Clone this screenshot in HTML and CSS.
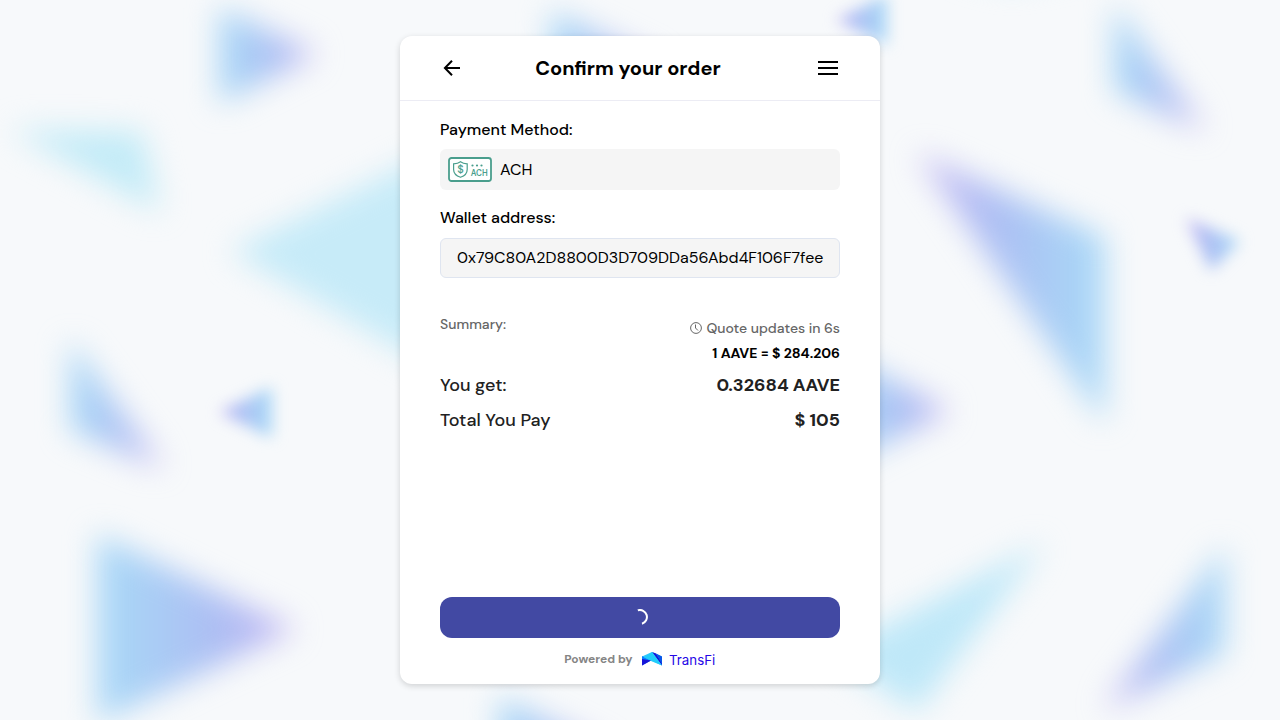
FILE: index.html
```html
<!DOCTYPE html>
<html lang="en">
<head>
<meta charset="utf-8">
<title>Confirm your order</title>
<link rel="stylesheet" href="styles.css">
</head>
<body>
<svg class="backdrop" viewBox="0 0 1280 720" aria-hidden="true">
  <defs>
    <linearGradient id="right"><stop offset="0" stop-color="#abdaf7"/><stop offset=".25" stop-color="#a9cef5"/><stop offset=".6" stop-color="#adbef3"/><stop offset="1" stop-color="#c6b7f3"/></linearGradient>
    <linearGradient id="left"><stop offset="0" stop-color="#c6b7f3"/><stop offset=".4" stop-color="#adbef3"/><stop offset=".75" stop-color="#a9cef5"/><stop offset="1" stop-color="#abdaf7"/></linearGradient>
    <filter id="soft" filterUnits="userSpaceOnUse" x="-60" y="-60" width="1400" height="840" color-interpolation-filters="sRGB"><feGaussianBlur stdDeviation="15"/></filter>
    <filter id="small" filterUnits="userSpaceOnUse" x="-60" y="-60" width="1400" height="840" color-interpolation-filters="sRGB"><feGaussianBlur stdDeviation="7.500"/></filter>
  </defs>
  <g filter="url(#soft)">
    <path fill="url(#right)" d="M219 7V104L317 54Z"/>
    <path fill="url(#right)" d="M551 11V120L660 64Z"/>
    <path fill="#c3ebf7" d="M10 130L142 131L160 212Z"/>
    <path fill="#c7ebf8" d="M230 251L460 139V384Z"/>
    <path fill="url(#right)" d="M70 340V430L164 469Z"/>
    <path fill="url(#right)" d="M97 534V723L296 629Z"/>
    <path fill="url(#right)" d="M1114 4V91L1205 131Z"/>
    <path fill="url(#left)" d="M917 153L1105 237V424Z"/>
    <path fill="url(#right)" d="M840 352V466L950 411Z"/>
    <path fill="#bfe8f8" d="M1044 543L830 653L917 712Z"/>
    <path fill="url(#left)" d="M1225 546V653L1103 710Z"/>
    <path fill="url(#right)" d="M499 697V810L610 752Z"/>
    <path fill="#cfedf7" d="M950 -35L1010 -18L1090 -35Z"/>
  </g>
  <g filter="url(#small)">
    <path fill="url(#left)" d="M219 412L272 387V438Z"/>
    <path fill="url(#left)" d="M836 20L887 -5V45Z"/>
    <path fill="url(#left)" d="M1186 218L1240 241L1211 271Z"/>
  </g>
</svg>
<main class="card">
  <header class="header">
    <svg class="icon" viewBox="0 0 24 24"><path d="M20 12H5.500M12 4.700L4.900 12L12 19.300"/></svg>
    <h1 class="title">Confirm your order</h1>
    <svg class="icon" viewBox="0 0 24 24"><path d="M3 6H21M3 12H21M3 18H21" stroke-linecap="square"/></svg>
  </header>
  <section class="content">
    <div class="label"><span class="payment-label">Payment Method:</span></div>
    <div class="method">
      <svg class="ach-icon" viewBox="0 0 44 25">
        <rect class="ach-frame" x="1" y="1" width="42" height="23" rx="2.5"/>
        <path class="ach-line" d="M12.500 4.700C10.500 6.200 8 6.700 5.600 6.800V12.500C5.600 16.500 8.500 19 12.500 20.300C16.500 19 19.200 16.500 19.200 12.500V6.800C16.800 6.700 14.500 6.200 12.500 4.700Z"/>
        <text class="ach-dollar" x="12.400" y="16" text-anchor="middle">$</text>
        <circle class="ach-dot" cx="24.500" cy="8.500" r="1.100"/><circle class="ach-dot" cx="29" cy="8.500" r="1.100"/><circle class="ach-dot" cx="33.500" cy="8.500" r="1.100"/>
        <text class="ach-text" x="22.800" y="18.600" textLength="17" lengthAdjust="spacingAndGlyphs">ACH</text>
      </svg>
      <span class="ach-name">ACH</span>
    </div>
    <div class="label"><span class="wallet-label">Wallet address:</span></div>
    <div class="wallet"><span class="address">0x79C80A2D8800D3D709DDa56Abd4F106F7fee</span></div>
    <div class="summary">
      <span class="summary-label">Summary:</span>
      <div class="quote">
        <div class="quote-update">
          <svg class="clock" viewBox="0 0 12 12"><circle cx="6" cy="6" r="5.400"/><path d="M5.500 2.500V6L8 8.500"/></svg>
          <span class="quote-text">Quote updates in 6s</span>
        </div>
        <div class="rate"><span class="rate-text">1 AAVE = $ 284.206</span></div>
      </div>
    </div>
    <div class="row"><span class="get-label">You get:</span><b class="get-value">0.32684 AAVE</b></div>
    <div class="row"><span class="pay-label">Total You Pay</span><b class="pay-value">$ 105</b></div>
  </section>
  <footer class="footer">
    <button class="submit" aria-label="Processing"><svg class="spinner" viewBox="0 0 16 16"><path d="M5.800 1.300A7 7 0 1 1 10 14.700"/></svg></button>
    <div class="powered">
      <span class="powered-text">Powered by</span>
      <svg class="logo" viewBox="0 0 20 14">
        <path fill="#36c8fb" d="M0 4.500L10 0L20 4.500V13.500L9 9Z"/>
        <path fill="#087fff" d="M0 4L9 8.500L0 13.500Z"/>
        <path fill="#1714d8" d="M0 7V13.500L9 8.500ZM10 0L14 1.500L20 11V13.500Z"/>
        <path fill="#22cdfa" d="M10 0L20 13.500L9 8.500L2 5.500Z"/>
        <path fill="#0755e8" d="M14 1.500L20 4.500V12Z"/>
      </svg>
      <span class="brand">TransFi</span>
    </div>
  </footer>
</main>
</body>
</html>
```

FILE: styles.css
```css
* { box-sizing: border-box; }
body { margin: 0; height: 720px; overflow: hidden; display: flex; align-items: center; justify-content: center; background: #f7f9fb; color: #000; font-family: "DM Sans", Inter, sans-serif; }
svg { display: block; flex: none; }
span, b, h1 { white-space: nowrap; }
.backdrop { position: absolute; inset: 0; width: 1280px; height: 720px; }
.card { position: relative; width: 480px; height: 648px; display: flex; flex-direction: column; background: #fff; border-radius: 12px; box-shadow: 0 2px 6px rgba(0,0,0,.16); }
.header { height: 65px; display: flex; align-items: center; justify-content: space-between; padding: 0 40px; border-bottom: 1px solid #ececf4; }
.icon { width: 24px; height: 24px; fill: none; stroke: #000; stroke-width: 2; }
.title { margin: 0 24px 0 0; font-size: 20px; line-height: 26px; font-weight: 700; }
.content { padding: 16px 40px 0; flex: 1; }
.label { height: 24px; font-size: 16px; line-height: 25px; font-weight: 500; }
.method { display: flex; align-items: center; gap: 8px; height: 41px; margin: 8px 0 15px; padding: 0 8px; background: #f5f5f5; border-radius: 6px; }
.ach-icon { width: 44px; height: 25px; }
.ach-frame { fill: #fff; stroke: #4a9e8d; stroke-width: 1.8; }
.ach-line { fill: none; stroke: #4a9e8d; stroke-width: 1.2; }
.ach-dot, .ach-dollar, .ach-text { fill: #4a9e8d; }
.ach-dollar { font-size: 11px; font-weight: 500; }
.ach-text { font-size: 8.5px; font-weight: 600; }
.ach-name { font-size: 16px; }
.wallet { display: flex; align-items: center; height: 40px; margin-top: 9px; padding: 0 16px 2px; background: #f5f5f5; border: 1px solid #dfe5f0; border-radius: 6px; font-size: 16px; }
.summary { display: flex; justify-content: space-between; height: 51px; margin-top: 38px; font-size: 14px; color: #666; }
.summary-label { line-height: 17px; font-weight: 500; }
.quote { display: flex; flex-direction: column; align-items: flex-end; }
.quote-update { display: flex; align-items: center; gap: 4px; height: 24px; font-weight: 500; }
.clock { width: 12px; height: 12px; fill: none; stroke: #666; stroke-width: 1; }
.rate { color: #000; font-weight: 700; line-height: 26px; }
.row { display: flex; justify-content: space-between; height: 35px; align-items: center; color: #212121; font-size: 18px; font-weight: 500; }
.row b { font-weight: 700; }
.footer { padding: 0 40px; height: 87px; }
.submit { display: flex; align-items: center; justify-content: center; width: 100%; height: 41px; padding: 0 0 1px; border: 0; border-radius: 12px; background: #4249a3; }
.spinner { width: 16px; height: 16px; fill: none; stroke: #fff; stroke-width: 2; }
.powered { display: flex; align-items: center; justify-content: center; height: 24px; margin-top: 9px; font-size: 12px; color: #858585; }
.powered-text { font-weight: 700; line-height: 20px; }
.logo { width: 20px; height: 14px; margin: 0 7px 0 9.5px; }
.brand { color: #2608e6; font-family: Inter, sans-serif; font-size: 13.3px; font-weight: 400; line-height: 20px; padding-top: 2px; margin-right: .5px; }
```
